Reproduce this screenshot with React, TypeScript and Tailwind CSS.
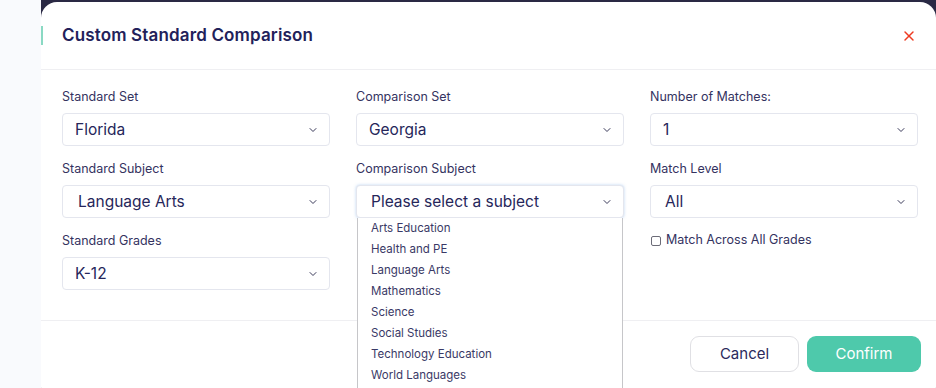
import { ChevronDown, X } from 'lucide-react'

const subjects = [
	'Arts Education',
	'Health and PE',
	'Language Arts',
	'Mathematics',
	'Science',
	'Social Studies',
	'Technology Education',
	'World Languages',
]

const labelClass = 'mb-[8px] h-[17px] text-[12.5px] leading-[17px] text-[#34335f]'
const selectClass = 'flex h-[33px] items-center justify-between rounded-[4px] border border-[#e4e6ee] bg-white pr-[10px] text-[15.5px] text-[#26265a]'

function Select({ value, inset = 'pl-[12px]', focused }: { value: string, inset?: string, focused?: boolean }) {
	return (
		<div className={`${selectClass} ${inset} ${focused ? 'border-[#a9c9ee] shadow-[0_0_3px_rgba(120,170,230,0.5)]' : ''}`}>
			<span>{value}</span>
			<ChevronDown size={12} strokeWidth={2} className="text-[#3a3a5a]" />
		</div>
	)
}

function Field({ label, value, inset, focused }: { label: string, value: string, inset?: string, focused?: boolean }) {
	return (
		<div className="flex flex-col">
			<div className={labelClass}>{label}</div>
			<Select value={value} inset={inset} focused={focused} />
		</div>
	)
}

export default function App() {
	return (
		<div className="flex h-[388px] w-[936px] overflow-hidden font-['Inter',sans-serif]">
			<div className="w-[41px] shrink-0 bg-[#f9fafd]" />
			<div className="flex-1 bg-[#2a2944] pt-[2px]">
				<div className="relative flex h-[400px] flex-col rounded-[16px] bg-white">
					{/* header */}
					<div className="flex h-[68px] items-center justify-between border-b border-[#efeff2] pl-[21px] pr-[19px]">
						<div className="absolute left-0 top-[24px] h-[19px] w-[2px] bg-[#8ad9c3]" />
						<h2 className="text-[17px] font-semibold tracking-[0.15px] text-[#22215a]">Custom Standard Comparison</h2>
						<X size={16} strokeWidth={2.2} className="text-[#ee3b22]" />
					</div>

					{/* body */}
					<div className="grid h-[251px] grid-cols-3 content-start gap-x-[26px] gap-y-[14px] border-b border-[#efeff2] pl-[21px] pr-[18px] pt-[18px]">
						<Field label="Standard Set" value="Florida" />
						<Field label="Comparison Set" value="Georgia" />
						<Field label="Number of Matches:" value="1" />
						<Field label="Standard Subject" value="Language Arts" inset="pl-[15px]" />
						<div className="relative flex flex-col">
							<div className={labelClass}>Comparison Subject</div>
							<Select value="Please select a subject" inset="pl-[14px]" focused />
							<div className="absolute left-[1px] right-[1px] top-[58px] z-10 flex flex-col border border-t-0 border-[#c6c6c9] bg-white pb-[20px]">
								{subjects.map((s) => (
									<div key={s} className="h-[21px] pl-[13px] text-[11.5px] leading-[21px] text-[#3a3966]">{s}</div>
								))}
							</div>
						</div>
						<Field label="Match Level" value="All" inset="pl-[14px]" />
						<Field label="Standard Grades" value="K-12" />
						<div />
						<label className="flex h-[17px] items-center gap-[5px] pl-[1px] text-[12.5px] text-[#34335f]">
							<span className="h-[10px] w-[10px] rounded-[2px] border border-[#6c6c78] bg-white" />
							Match Across All Grades
						</label>
					</div>

					{/* footer */}
					<div className="flex justify-end gap-[8px] pr-[15px] pt-[15px]">
						<button className="h-[36px] w-[109px] rounded-[9px] border border-[#e0e0e4] bg-white text-[15px] text-[#2b2a5c]">Cancel</button>
						<button className="h-[36px] w-[114px] rounded-[9px] bg-[#4ec9ab] text-[15px] text-white">Confirm</button>
					</div>
				</div>
			</div>
		</div>
	)
}
